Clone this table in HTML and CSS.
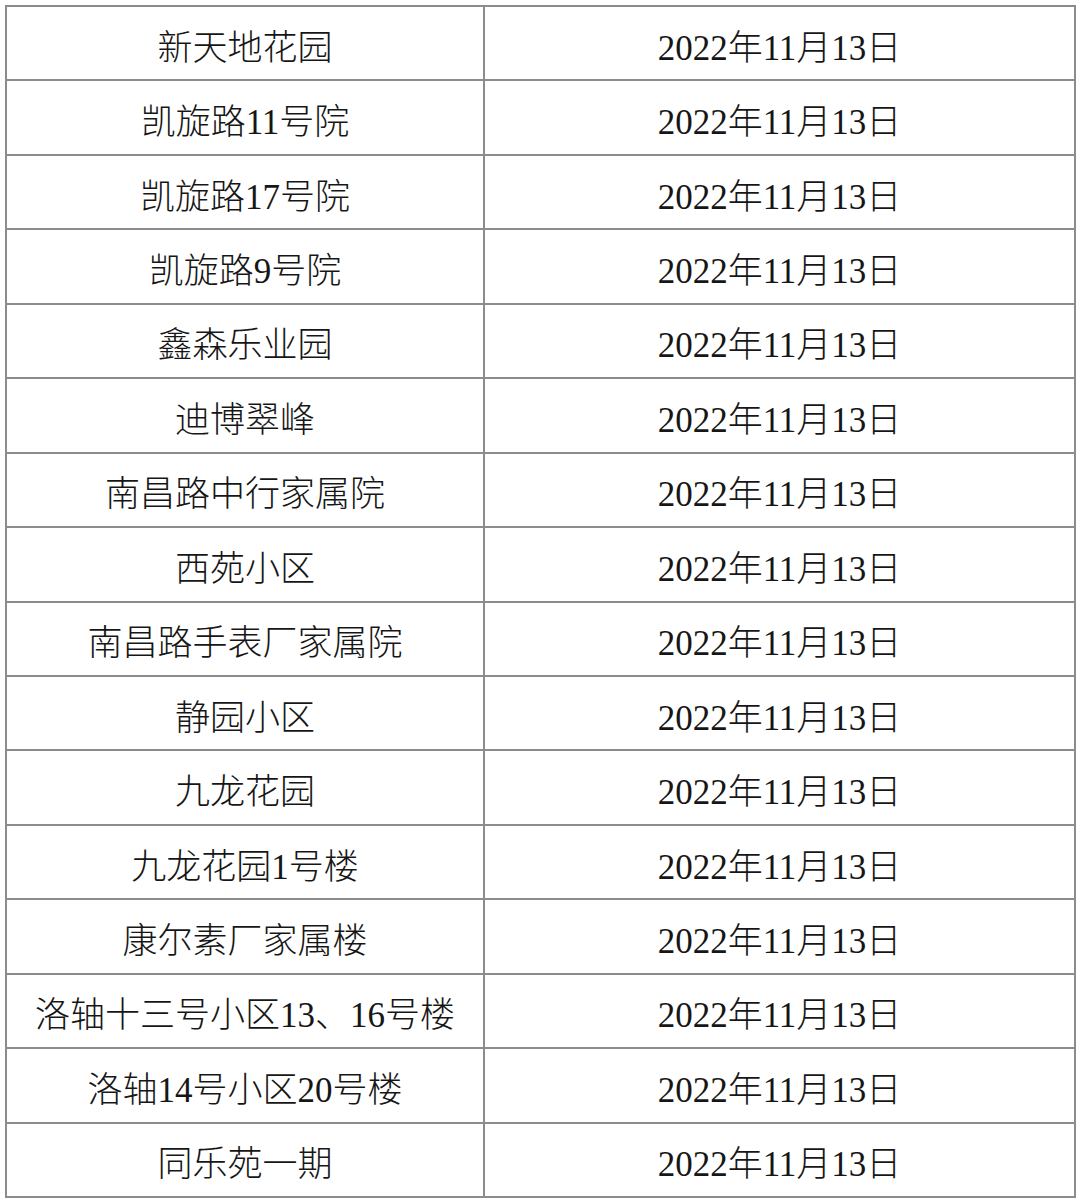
FILE: index.html
```html
<!DOCTYPE html>
<html lang="zh">
<head>
<meta charset="utf-8">
<link rel="stylesheet" href="styles.css">
</head>
<body>
<table class="list">
<tr><td class="name">新天地花园</td><td class="date">2022年11月13日</td></tr>
<tr><td class="name">凯旋路11号院</td><td class="date">2022年11月13日</td></tr>
<tr><td class="name">凯旋路17号院</td><td class="date">2022年11月13日</td></tr>
<tr><td class="name">凯旋路9号院</td><td class="date">2022年11月13日</td></tr>
<tr><td class="name">鑫森乐业园</td><td class="date">2022年11月13日</td></tr>
<tr><td class="name">迪博翠峰</td><td class="date">2022年11月13日</td></tr>
<tr><td class="name">南昌路中行家属院</td><td class="date">2022年11月13日</td></tr>
<tr><td class="name">西苑小区</td><td class="date">2022年11月13日</td></tr>
<tr><td class="name">南昌路手表厂家属院</td><td class="date">2022年11月13日</td></tr>
<tr><td class="name">静园小区</td><td class="date">2022年11月13日</td></tr>
<tr><td class="name">九龙花园</td><td class="date">2022年11月13日</td></tr>
<tr><td class="name">九龙花园1号楼</td><td class="date">2022年11月13日</td></tr>
<tr><td class="name">康尔素厂家属楼</td><td class="date">2022年11月13日</td></tr>
<tr><td class="name">洛轴十三号小区13、16号楼</td><td class="date">2022年11月13日</td></tr>
<tr><td class="name">洛轴14号小区20号楼</td><td class="date">2022年11月13日</td></tr>
<tr><td class="name">同乐苑一期</td><td class="date">2022年11月13日</td></tr>
</table>
</body>
</html>
```
FILE: styles.css
```css
html, body {
  margin: 0;
  padding: 0;
  background: #ffffff;
}
body {
  padding: 5px 0 0 5px;
}
.list {
  border-collapse: collapse;
  width: 1071px;
  table-layout: fixed;
  font-family: "Liberation Serif", "Noto Sans CJK SC", serif;
  font-size: 35px;
  font-weight: 300;
  color: #161616;
}
.list td {
  border: 2px solid #8c8c8c;
  height: 74.45px;
  padding: 10px 0 0 0;
  box-sizing: border-box;
  text-align: center;
  vertical-align: middle;
  line-height: 1;
  white-space: nowrap;
}
.list td.name {
  width: 478px;
}
```
